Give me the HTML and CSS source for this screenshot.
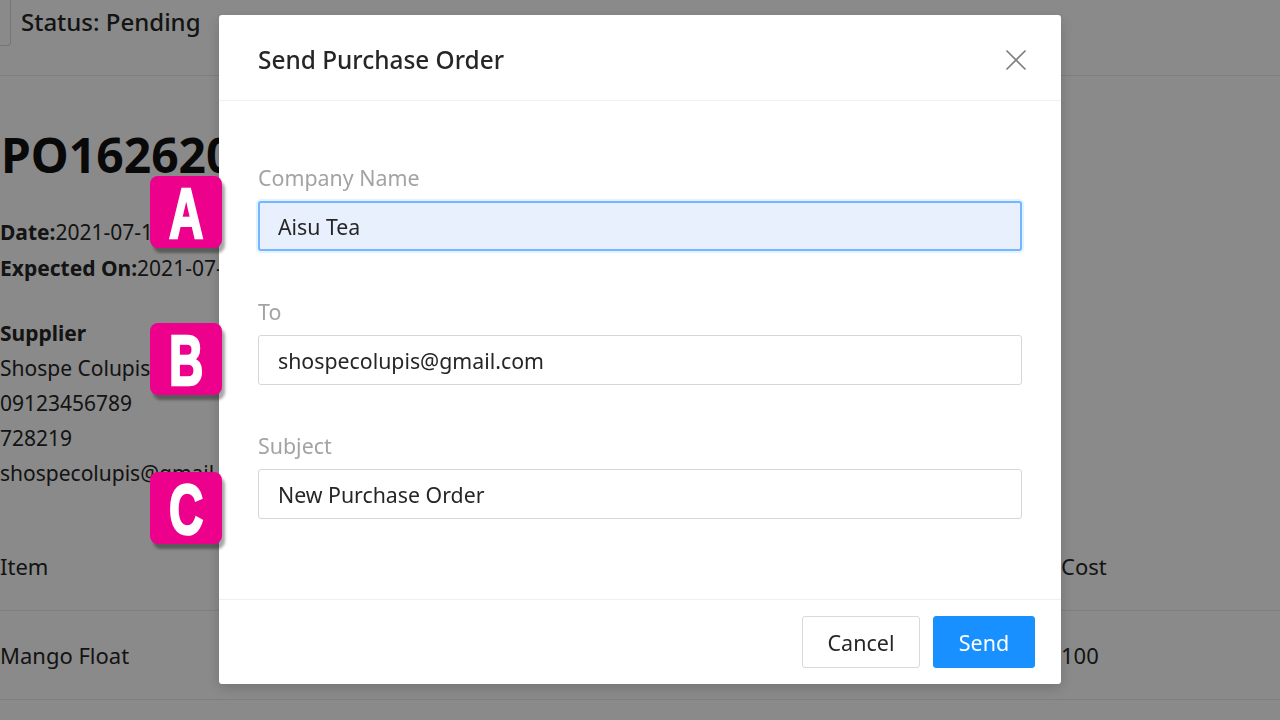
FILE: index.html
```html
<!DOCTYPE html>
<html lang="en">
<head>
<meta charset="utf-8">
<title>Send Purchase Order</title>
<link rel="stylesheet" href="styles.css">
</head>
<body>
<div class="page">
  <div class="topbar">
    <span class="back-btn"></span>
    <span class="status">Status: Pending</span>
  </div>
  <h1 class="po-title">PO1626200417</h1>
  <div class="meta">
    <div><b>Date:</b>2021-07-13</div>
    <div><b>Expected On:</b>2021-07-20</div>
  </div>
  <div class="supplier">
    <div><b>Supplier</b></div>
    <div>Shospe Colupis</div>
    <div>09123456789</div>
    <div>728219</div>
    <div>shospecolupis@gmail.com</div>
  </div>
  <div class="table">
    <div class="row head"><span>Item</span><span>Qty</span><span>Cost</span></div>
    <div class="row"><span>Mango Float</span><span>1</span><span>100</span></div>
  </div>
</div>

<div class="overlay">
  <div class="modal">
    <div class="modal-header">
      <span class="modal-title">Send Purchase Order</span>
      <svg class="close" width="22" height="22" viewBox="0 0 22 22"><path d="M1.5 1.5 L20.5 20.5 M20.5 1.5 L1.5 20.5" stroke="#808080" stroke-width="1.7" fill="none"/></svg>
    </div>
    <div class="modal-body">
      <div class="field">
        <label class="label">Company Name</label>
        <div class="input focused">Aisu Tea</div>
      </div>
      <div class="field">
        <label class="label">To</label>
        <div class="input">shospecolupis@gmail.com</div>
      </div>
      <div class="field">
        <label class="label">Subject</label>
        <div class="input">New Purchase Order</div>
      </div>
    </div>
    <div class="modal-footer">
      <button class="btn">Cancel</button>
      <button class="btn primary">Send</button>
    </div>
  </div>
  <div class="badge badge-a"><span class="badge-letter">A</span></div>
  <div class="badge badge-b"><span class="badge-letter">B</span></div>
  <div class="badge badge-c"><span class="badge-letter">C</span></div>
</div>
</body>
</html>
```
FILE: styles.css
```css
html, body {
  margin: 0;
  padding: 0;
  width: 1280px;
  height: 720px;
  overflow: hidden;
  background: #fff;
  font-family: "Segoe UI", "Noto Sans", "Open Sans", sans-serif;
  color: #262626;
}

.page {
  width: 1280px;
}

.topbar {
  display: flex;
  align-items: flex-start;
  height: 76px;
  border-bottom: 1px solid #eaeaea;
  box-sizing: border-box;
}
.back-btn {
  width: 10px;
  height: 45px;
  border: 1px solid #d9d9d9;
  border-left: none;
  border-top: none;
  border-radius: 0 0 4px 0;
}
.status {
  margin-left: 10px;
  font-size: 24px;
  line-height: 44px;
  font-weight: 500;
}

.po-title {
  margin: 48px 0 0 1px;
  font-size: 48px;
  line-height: 62px;
  font-weight: 700;
  color: #111;
}

.meta {
  margin-top: 28px;
  font-size: 21px;
  line-height: 36px;
}
.meta b, .supplier b { font-weight: 700; }

.supplier {
  margin-top: 30px;
  font-size: 21px;
  line-height: 35px;
}

.table {
  margin-top: 31px;
}
.row {
  display: grid;
  grid-template-columns: 1fr 200px 219px;
  height: 88px;
  align-items: center;
  border-bottom: 1px solid #eaeaea;
  font-size: 22px;
}

.overlay {
  position: fixed;
  inset: 0;
  background: rgba(0, 0, 0, 0.46);
}

.modal {
  position: absolute;
  left: 219px;
  top: 15px;
  width: 842px;
  background: #fff;
  border-radius: 3px;
  box-shadow: 0 4px 14px rgba(0, 0, 0, 0.18);
}

.modal-header {
  height: 86px;
  box-sizing: border-box;
  padding: 0 34px 0 39px;
  display: flex;
  align-items: center;
  justify-content: space-between;
  border-bottom: 1px solid #f0f0f0;
}
.modal-title {
  font-size: 24.4px;
  font-weight: 500;
  color: #262626;
  padding-top: 3px;
}
.close { display: block; margin-top: 4px; }

.modal-body {
  padding: 59px 39px 37px 39px;
}
.field {
  margin-bottom: 43px;
}
.label {
  display: block;
  font-size: 21.4px;
  line-height: 33px;
  padding-top: 1px;
  color: #a3a3a3;
  margin-bottom: 7px;
}
.input {
  height: 50px;
  box-sizing: border-box;
  border: 1px solid #d6d6d6;
  border-radius: 3px;
  padding: 1px 19px 0;
  display: flex;
  align-items: center;
  font-size: 21.3px;
  color: #262626;
}
.input.focused {
  background: #e8f0fe;
  border: 2px solid #74b6ff;
  padding: 1px 18px 0;
  box-shadow: 0 0 0 2px rgba(24, 144, 255, 0.12);
}

.modal-footer {
  border-top: 1px solid #f0f0f0;
  padding: 16px 26px 16px 0;
  display: flex;
  justify-content: flex-end;
  gap: 13px;
}
.btn {
  height: 52px;
  box-sizing: border-box;
  border: 1px solid #d9d9d9;
  border-radius: 3px;
  background: #fff;
  font-family: inherit;
  font-size: 21.5px;
  line-height: 1;
  color: #262626;
  width: 118px;
  padding: 2px 0 0;
}
.btn.primary {
  width: 102px;
  background: #1890ff;
  border-color: #1890ff;
  color: #fff;
}

.badge {
  position: absolute;
  left: 150px;
  width: 72px;
  height: 72px;
  border-radius: 8px;
  background: #ec008c;
  box-shadow: 3px 5px 3px rgba(0, 0, 0, 0.35);
  display: flex;
  align-items: center;
  justify-content: center;
}
.badge-letter {
  display: block;
  color: #fff;
  font-family: "Liberation Sans", sans-serif;
  font-weight: 700;
  font-size: 70px;
  line-height: 60px;
  -webkit-text-stroke: 2.5px #fff;
  transform: scaleX(0.68);
  padding-top: 3px;
}
.badge-a { top: 176px; }
.badge-b { top: 323px; }
.badge-c { top: 472px; }
```
